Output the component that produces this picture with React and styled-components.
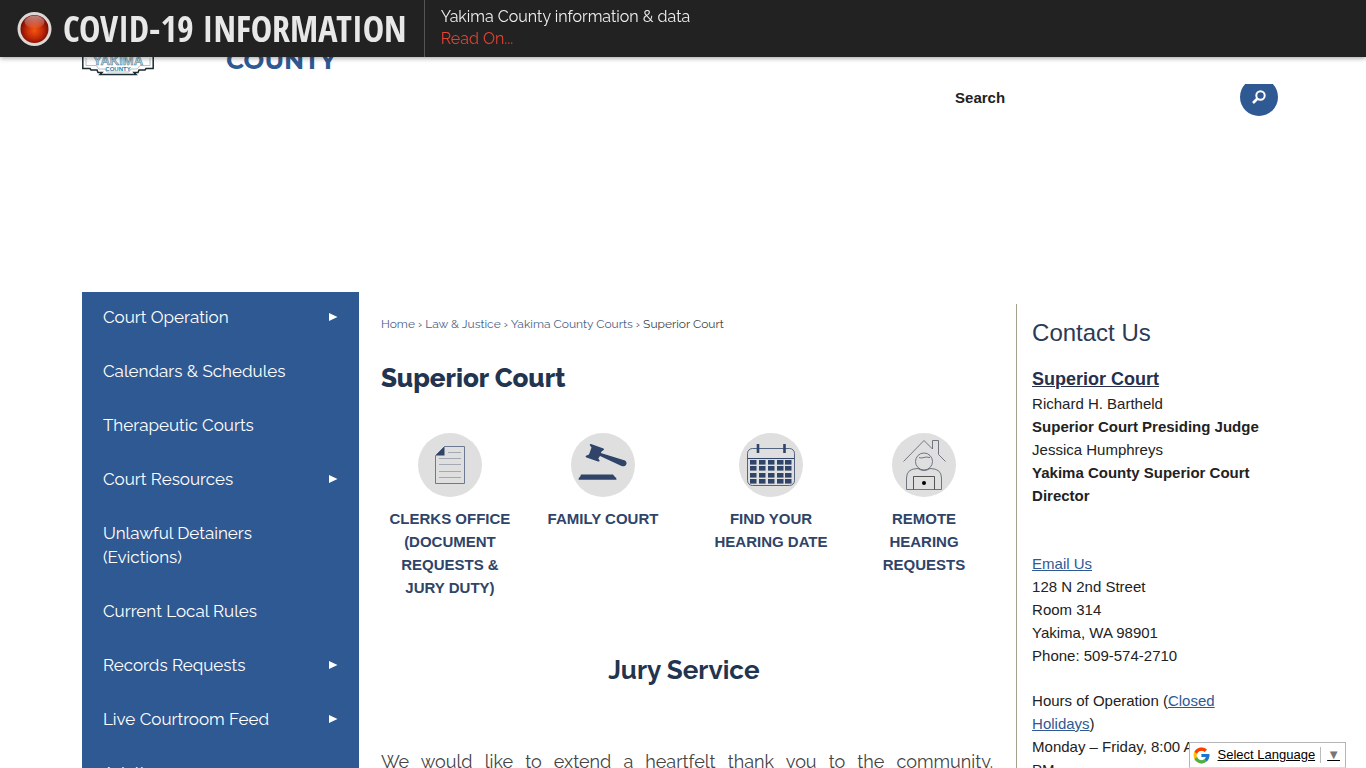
import React from 'react';
import styled, { createGlobalStyle } from 'styled-components';
import { FcGoogle } from 'react-icons/fc';

const SANS = '"Liberation Sans", Arial, sans-serif';
const DISPLAY = 'Raleway, Lato, sans-serif';

const GlobalStyle = createGlobalStyle`
  * {
    box-sizing: border-box;
  }

  body {
    margin: 0;
    background-color: #fff;
    color: #222;
    font-family: ${SANS};
    font-size: 15px;
    line-height: 23px;
  }

  h1, h2, h3, p, ul, ol {
    margin: 0;
    padding: 0;
  }

  ul, ol {
    list-style: none;
  }
`;

const Page = styled.div`
  height: 100vh;
  overflow: hidden;
`;

const AlertBar = styled.div`
  position: fixed;
  z-index: 10;
  top: 0;
  left: 0;
  right: 0;
  height: 57px;

  display: flex;

  background-color: #222;
  box-shadow: 0 1px 5px rgba(0, 0, 0, 0.4);
`;

const AlertTitle = styled.div`
  padding: 0 17px;

  display: flex;
  align-items: center;
  gap: 10px;

  border-right: 1px solid #555;

  svg {
    width: 36px;
    height: 36px;
  }

  strong {
    font-family: 'Open Sans Condensed', 'Liberation Sans Narrow', 'Open Sans',
      sans-serif;
    font-size: 36px;
    line-height: 48px;
    color: #e8e8e8;
    text-transform: uppercase;
    white-space: nowrap;
  }
`;

const AlertText = styled.div`
  padding: 6px 16px;

  font-family: ${DISPLAY};
  font-size: 16px;
  line-height: 22px;
  color: #eee;

  a {
    color: #e0432f;
    text-decoration: none;
  }
`;

const Header = styled.header`
  height: 292px;
  padding: 0 6%;

  display: flex;
  justify-content: space-between;
`;

const Brand = styled.a`
  padding-top: 34px;

  display: flex;
  align-items: flex-start;
  gap: 72px;

  font-family: Montserrat, ${DISPLAY};
  font-size: 25px;
  font-weight: 700;
  line-height: 26px;
  color: #2f5993;
  text-decoration: none;

  svg {
    width: 72px;
    height: 42px;
  }

  span {
    padding-top: 13px;
  }
`;

const SearchForm = styled.form`
  width: 323px;
  height: 32px;
  margin: 84px 6px 0 0;

  display: flex;
  overflow: hidden;

  label {
    line-height: 28px;
    font-weight: 700;
  }

  input {
    flex: 1;
    min-width: 0;
    margin-left: 8px;
    border: none;
    outline: none;
    background: none;
  }
`;

const SearchButton = styled.button`
  width: 38px;
  height: 38px;
  padding: 0;
  align-self: flex-end;
  flex-shrink: 0;

  border: none;
  border-radius: 50%;
  background-color: #2f5993;
  cursor: pointer;

  svg {
    display: block;
    margin: 0 auto;
  }
`;

const Columns = styled.div`
  margin: 0 6%;

  display: grid;
  grid-template-columns: 277px minmax(0, 1fr) 268px;
  align-items: start;
`;

const SideNav = styled.nav`
  padding-bottom: 15px;
  background-color: #2f5993;
`;

const NavLink = styled.a`
  min-height: 54px;
  padding: 13px 21px 17px;

  display: flex;
  align-items: center;
  justify-content: space-between;

  font-family: ${DISPLAY};
  font-size: 17px;
  line-height: 24px;
  color: #fff;
  text-decoration: none;

  span {
    max-width: 200px;
  }
`;

const Main = styled.main`
  padding: 20px 23px 0 22px;
`;

const Breadcrumb = styled.nav`
  font-family: ${DISPLAY};
  font-size: 12px;
  line-height: 24px;
  color: #444;

  a {
    color: #4a6285;
    text-decoration: none;
  }
`;

const Title = styled.h1`
  margin-top: 26px;

  font-family: ${DISPLAY};
  font-size: 26px;
  font-weight: 800;
  line-height: 32px;
  color: #22344f;
`;

const SectionTitle = styled(Title)`
  margin-top: 55px;
  font-weight: 700;
  text-align: center;
`;

const Services = styled.ul`
  margin-top: 39px;

  display: grid;
  grid-template-columns: 138fr 168fr 168fr 138fr;
`;

const Service = styled.a`
  display: flex;
  flex-direction: column;
  align-items: center;
  gap: 10px;

  font-weight: 700;
  color: #2f4468;
  text-align: center;
  text-transform: uppercase;
  text-decoration: none;

  svg {
    width: 64px;
    height: 64px;
  }

  span {
    max-width: 126px;
  }
`;

const Intro = styled.p`
  margin-top: 61px;

  font-family: ${DISPLAY};
  font-size: 18px;
  line-height: 30px;
  color: #444;
  text-align: justify;
  text-align-last: justify;
`;

const Contact = styled.aside`
  margin-top: 12px;
  padding: 14px 20px 20px 15px;
  border-left: 1px solid #a3a28c;

  h2 {
    font-size: 24px;
    font-weight: 400;
    line-height: 30px;
    color: #2c3a55;
  }

  h3 {
    margin: 19px 0 1px;
    font-size: 18px;
    line-height: 24px;
  }

  h3 a {
    color: #26304d;
  }

  p a {
    color: #2f5993;
  }
`;

const Block = styled.p`
  margin-top: ${(props) => props.$gap || 0}px;
`;

const Translate = styled.div`
  position: fixed;
  z-index: 5;
  right: 20px;
  bottom: 0;
  height: 26px;
  padding: 0 5px 0 2px;

  display: flex;
  align-items: center;

  background-color: #fff;
  border: 1px solid #b5b5b5;
  border-bottom-color: #ddd;

  button {
    padding: 0 0 0 7px;

    display: flex;
    align-items: center;
    gap: 5px;

    border: none;
    background: none;
    font-family: ${SANS};
    font-size: 13px;
    line-height: 16px;
    color: #000;
    text-decoration: underline;
    white-space: nowrap;
    cursor: pointer;
  }

  i {
    padding-left: 6px;
    border-left: 1px solid #bbb;
    font-style: normal;
    color: #767676;
  }
`;

const navItems = [
  { name: 'Court Operation', more: true },
  { name: 'Calendars & Schedules' },
  { name: 'Therapeutic Courts' },
  { name: 'Court Resources', more: true },
  { name: 'Unlawful Detainers (Evictions)' },
  { name: 'Current Local Rules' },
  { name: 'Records Requests', more: true },
  { name: 'Live Courtroom Feed', more: true },
  { name: 'Adult' },
];

function AlertIcon() {
  return (
    <svg viewBox="0 0 36 36" aria-hidden="true">
      <defs>
        <radialGradient id="lamp" cx="50%" cy="55%" r="50%">
          <stop offset="0" stopColor="#f4560f" />
          <stop offset="0.55" stopColor="#c62c08" />
          <stop offset="1" stopColor="#7d0d04" />
        </radialGradient>
        <linearGradient id="shine" x1="0" y1="0" x2="0" y2="1">
          <stop offset="0" stopColor="#fff" stopOpacity="0.5" />
          <stop offset="1" stopColor="#fff" stopOpacity="0.05" />
        </linearGradient>
      </defs>
      <circle cx="17.5" cy="18" r="17" fill="#ddd8d5" />
      <circle cx="17.5" cy="18" r="14" fill="url(#lamp)" />
      <ellipse cx="17.5" cy="11" rx="10" ry="6.5" fill="url(#shine)" />
    </svg>
  );
}

function Crest() {
  return (
    <svg viewBox="0 0 72 42" aria-hidden="true">
      <path
        d="M.8 0V34.5H8L9 36H15L16 38.5H20L18 40.5H54L52 38.5H56L57 36H63L64 34.5H71.2V0"
        fill="#fff"
        stroke="#1c2a31"
        strokeWidth="1.5"
      />
      <path d="M4 24V31.5H14L17 35H23L25 38H47L49 35H55L58 31.5H68V24" fill="none" stroke="#9ba7ad" strokeWidth=".7" />
      <text x="36" y="31" textAnchor="middle" fontFamily="Liberation Sans" fontWeight="700" fontSize="13" fill="#b9d7e4" stroke="#47788e" strokeWidth=".5">
        YAKIMA
      </text>
      <text x="36" y="36.5" textAnchor="middle" fontFamily="Liberation Sans" fontWeight="700" fontSize="6" fill="#287fa3">
        COUNTY
      </text>
    </svg>
  );
}

function DocumentIcon() {
  return (
    <svg viewBox="0 0 64 64" fill="none" aria-hidden="true">
      <circle cx="32" cy="32" r="32" fill="#dfdfdf" />
      <path d="M26.5 13.5H46.5V50.5H17.5V22.5Z" stroke="#6b7a90" />
      <path d="M26.5 13.5V22.5H17.5Z" fill="#2f4468" />
      <path d="M30 19.5H43M21 25.5H43M21 31.5H43M21 38.5H43M21 44.5H43" stroke="#a3a9b2" />
    </svg>
  );
}

function GavelIcon() {
  return (
    <svg viewBox="0 0 64 64" fill="#2f4468" aria-hidden="true">
      <circle cx="32" cy="32" r="32" fill="#dfdfdf" />
      <path d="M19 12.5Q18 10.8 20 11L32.5 15.5Q34 16.5 32 17.5L30.8 18.2L29.8 20L54 27.5Q56.5 29.5 55 32Q53.5 34 50.5 33L29 23L27.3 25.5L28.5 27.3Q29 29 27 28.5L15.5 24.5Q13.7 23.2 15.5 22.5L18 21.5L20.5 14.5Z" />
      <path d="M10 41.5H42L44 44Q45.5 44 45.5 46.8H7.5Q7.5 44 9 44Z" />
    </svg>
  );
}

function CalendarIcon() {
  const cols = [11, 20, 29, 38, 46];
  const rows = [27, 33, 40, 46];
  return (
    <svg viewBox="0 0 64 64" fill="none" aria-hidden="true">
      <circle cx="32" cy="32" r="32" fill="#dfdfdf" />
      <rect x="8.5" y="15.5" width="47" height="37" rx="5" stroke="#2f4468" strokeWidth=".8" />
      <path d="M8.5 25.5H55.5" stroke="#2f4468" />
      <path d="M19 11V20M45.5 11V20" stroke="#2f4468" strokeWidth="2.6" />
      {rows.map((y) =>
        cols.map((x) => (
          <rect key={`${x}-${y}`} x={x} y={y} width="6.5" height="4.6" fill="#2f4468" />
        ))
      )}
    </svg>
  );
}

function RemoteIcon() {
  return (
    <svg viewBox="0 0 64 64" fill="none" stroke="#626a77" strokeWidth=".9" aria-hidden="true">
      <circle cx="32" cy="32" r="32" fill="#dfdfdf" stroke="none" />
      <path d="M11.5 28.5L32 7.5L40.5 16V7.5H46.5V21.5L53.5 28.5" />
      <circle cx="32" cy="28.5" r="8.5" />
      <path d="M27 24.5Q29 25.5 31 24.7Q34 23.5 38 24.5" />
      <path d="M14.5 56.5V45Q14.5 35.5 26 35.5Q32 39.5 38 35.5Q49.5 35.5 49.5 45V56.5Z" />
      <path d="M21.5 56.5V43.5H42.5V56.5" stroke="#444" />
      <circle cx="32" cy="50" r="2" fill="#000" stroke="none" />
    </svg>
  );
}

const services = [
  { name: 'Clerks Office (Document Requests & Jury Duty)', Icon: DocumentIcon },
  { name: 'Family Court', Icon: GavelIcon },
  { name: 'Find Your Hearing Date', Icon: CalendarIcon },
  { name: 'Remote Hearing Requests', Icon: RemoteIcon },
];

function App() {
  return (
    <Page>
      <GlobalStyle />
      <AlertBar>
        <AlertTitle>
          <AlertIcon />
          <strong>Covid-19 Information</strong>
        </AlertTitle>
        <AlertText>
          <p>Yakima County information &amp; data</p>
          <a href="#covid">Read On...</a>
        </AlertText>
      </AlertBar>

      <Header>
        <Brand href="#home">
          <Crest />
          <span>COUNTY</span>
        </Brand>
        <SearchForm>
          <label htmlFor="search">Search</label>
          <input id="search" type="text" />
          <SearchButton type="button" aria-label="Go">
            <svg width="14" height="14" viewBox="0 0 14 14" fill="none" stroke="#fff">
              <circle cx="8.5" cy="5.5" r="4.2" strokeWidth="2" />
              <path d="M5.5 8.5L1 13" strokeWidth="2.6" />
            </svg>
          </SearchButton>
        </SearchForm>
      </Header>

      <Columns>
        <SideNav>
          <ul>
            {navItems.map((item) => (
              <li key={item.name}>
                <NavLink href="#nav">
                  <span>{item.name}</span>
                  {item.more && (
                    <svg width="9" height="8" viewBox="0 0 9 8" fill="#fff" aria-hidden="true">
                      <path d="M0 0L8.5 4L0 8Z" />
                    </svg>
                  )}
                </NavLink>
              </li>
            ))}
          </ul>
        </SideNav>

        <Main>
          <Breadcrumb>
            <a href="#home">Home</a> › <a href="#law">Law &amp; Justice</a> ›{' '}
            <a href="#courts">Yakima County Courts</a> › Superior Court
          </Breadcrumb>
          <Title>Superior Court</Title>
          <Services>
            {services.map(({ name, Icon }) => (
              <li key={name}>
                <Service href="#service">
                  <Icon />
                  <span>{name}</span>
                </Service>
              </li>
            ))}
          </Services>
          <SectionTitle as="h2">Jury Service&nbsp;</SectionTitle>
          <Intro>
            We would like to extend a heartfelt thank you to the community.
          </Intro>
        </Main>

        <Contact>
          <h2>Contact Us</h2>
          <h3>
            <a href="#court">Superior Court</a>
          </h3>
          <Block>
            Richard H. Bartheld
            <br />
            <b>Superior Court Presiding Judge</b>
            <br />
            Jessica Humphreys
            <br />
            <b>Yakima County Superior Court Director</b>
          </Block>
          <Block $gap={45}>
            <a href="#email">Email Us</a>
            <br />
            128 N 2nd Street
            <br />
            Room 314
            <br />
            Yakima, WA 98901
            <br />
            Phone: 509-574-2710
          </Block>
          <Block $gap={22}>
            Hours of Operation (<a href="#holidays">Closed Holidays</a>)
            <br />
            Monday – Friday, 8:00 AM – 5:00 PM
          </Block>
        </Contact>
      </Columns>

      <Translate>
        <FcGoogle size={19} />
        <button type="button">
          Select Language <i>▼</i>
        </button>
      </Translate>
    </Page>
  );
}

export default App;
